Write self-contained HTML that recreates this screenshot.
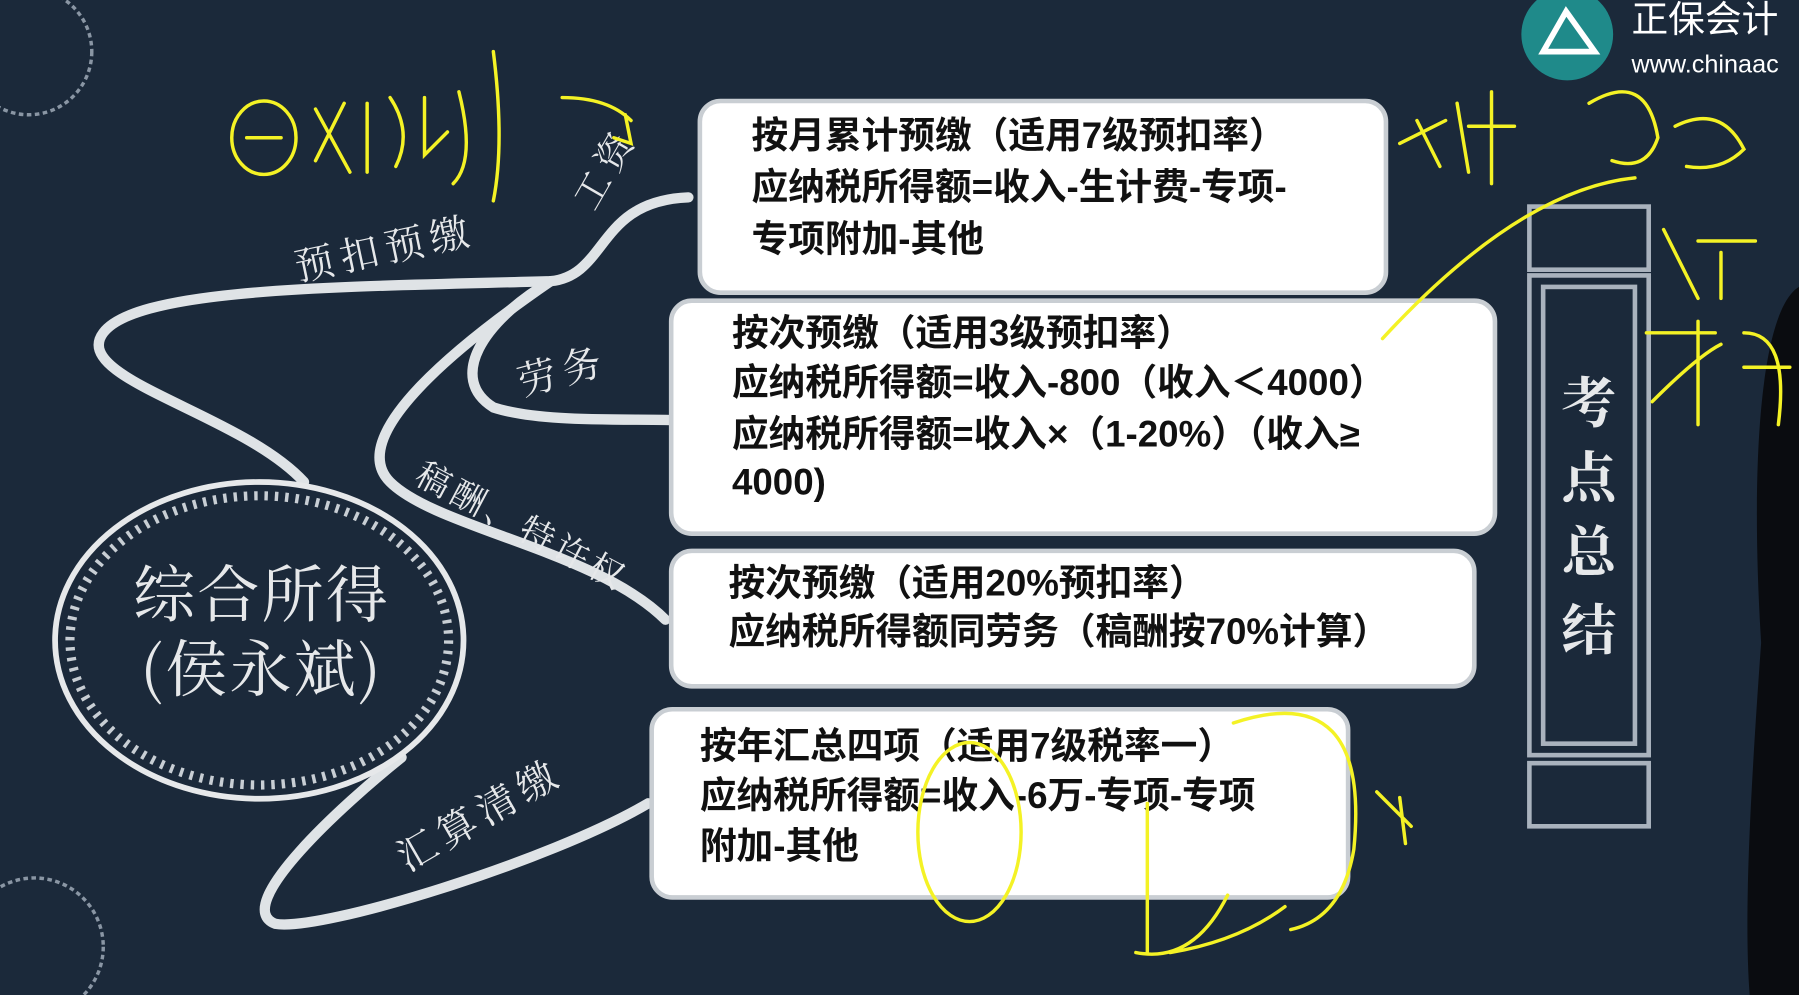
<!DOCTYPE html>
<html><head><meta charset="utf-8"><style>
html,body{margin:0;padding:0;background:#1a2839;overflow:hidden}
svg{display:block}
.b{font-family:"Liberation Sans","Noto Sans CJK SC",sans-serif;font-weight:bold;font-size:32px;fill:#111}
.l{font-family:"Noto Serif CJK SC","Liberation Serif",serif;fill:#e6e8ea}
</style></head><body>
<svg width="1799" height="995" viewBox="0 0 1568 867" preserveAspectRatio="none" xmlns="http://www.w3.org/2000/svg">
<rect width="1568" height="867" fill="#1b293a"/>
<circle cx="25" cy="45" r="55" fill="none" stroke="#8a96a4" stroke-width="3" stroke-dasharray="4 3"/>
<circle cx="30" cy="825" r="60" fill="none" stroke="#8a96a4" stroke-width="3" stroke-dasharray="4 3"/>
<g fill="none" stroke="#dfe3e6" stroke-width="9" stroke-linecap="round">
<path d="M265 420 C210 360 60 330 90 290 C120 250 300 250 480 245 C530 240 520 175 600 172"/>
<path d="M480 245 C420 280 390 330 430 355 C470 368 540 365 585 366"/>
<path d="M480 245 C400 300 300 380 340 420 C380 460 520 480 580 540"/>
<path d="M350 660 C300 700 200 790 240 805 C280 812 480 750 565 700"/>
</g>
<text class="l" style="font-size:32px;letter-spacing:6px" transform="translate(518,185) rotate(-60)">工资</text>
<text class="l" style="font-size:34px;letter-spacing:6px" transform="translate(260,245) rotate(-12)">预扣预缴</text>
<text class="l" style="font-size:34px;letter-spacing:6px" transform="translate(455,345) rotate(-15)">劳务</text>
<text class="l" style="font-size:30px;letter-spacing:4px" transform="translate(360,420) rotate(28)">稿酬、特许权</text>
<text class="l" style="font-size:34px;letter-spacing:6px" transform="translate(355,760) rotate(-30)">汇算清缴</text>
<ellipse cx="226" cy="558" rx="178" ry="138" fill="#1b293a" stroke="#e6e8ea" stroke-width="5"/>
<ellipse cx="226" cy="558" rx="165" ry="126" fill="none" stroke="#c8ced4" stroke-width="8" stroke-dasharray="3 6"/>
<text class="l" x="228" y="537" style="font-size:54px;letter-spacing:2px" text-anchor="middle">综合所得</text>
<text class="l" x="228" y="602" style="font-size:54px;letter-spacing:2px" text-anchor="middle">(侯永斌)</text>
<g fill="#fff" stroke="#c9ced3" stroke-width="4">
<rect x="610" y="88" width="598" height="167" rx="18"/>
<rect x="585" y="262" width="718" height="203" rx="18"/>
<rect x="585" y="480" width="700" height="118" rx="18"/>
<rect x="568" y="618" width="607" height="164" rx="18"/>
</g>
<text class="b" x="655" y="129">按月累计预缴（适用7级预扣率）</text>
<text class="b" x="655" y="174">应纳税所得额=收入-生计费-专项-</text>
<text class="b" x="655" y="219">专项附加-其他</text>
<text class="b" x="638" y="301">按次预缴（适用3级预扣率）</text>
<text class="b" x="638" y="344">应纳税所得额=收入-800（收入＜4000）</text>
<text class="b" x="638" y="389">应纳税所得额=收入×（1-20%）（收入≥</text>
<text class="b" x="638" y="431">4000)</text>
<text class="b" x="635" y="519">按次预缴（适用20%预扣率）</text>
<text class="b" x="635" y="561">应纳税所得额同劳务（稿酬按70%计算）</text>
<text class="b" x="610" y="661">按年汇总四项（适用7级税率一）</text>
<text class="b" x="610" y="704">应纳税所得额=收入-6万-专项-专项</text>
<text class="b" x="610" y="748">附加-其他</text>
<g fill="none" stroke="#a9b2bd" stroke-width="4">
<rect x="1333" y="240" width="104" height="418"/>
<rect x="1345" y="250" width="80" height="398"/>
<rect x="1333" y="180" width="104" height="55"/>
<rect x="1333" y="665" width="104" height="55"/>
</g>
<g class="l" style="font-size:48px;font-weight:bold" fill="#f2f2f2" text-anchor="middle">
<text x="1385" y="368">考</text><text x="1385" y="433">点</text><text x="1385" y="498">总</text><text x="1385" y="566">结</text>
</g>
<circle cx="1366" cy="30" r="40" fill="#1f8a8a"/>
<path d="M1345 45 L1365 10 L1390 45 Z" fill="none" stroke="#fff" stroke-width="5"/>
<text x="1422" y="28" font-family="Liberation Sans,Noto Sans CJK SC,sans-serif" font-size="32" fill="#fff">正保会计</text>
<text x="1422" y="63" font-family="Liberation Sans,sans-serif" font-size="22" fill="#fff">www.chinaac</text>
<path d="M1568 250 C1535 270 1525 400 1535 560 C1525 700 1520 800 1525 867 L1568 867 Z" fill="#0a0c10"/>
<g fill="none" stroke="#f4f225" stroke-width="3" stroke-linecap="round">
<ellipse cx="230" cy="120" rx="28" ry="32"/>
<path d="M215 120 h30 M275 95 l30 55 M300 90 l-25 50 M320 90 v60 M340 85 q20 30 5 60 M370 85 v50 l20 -20 M400 80 q15 60 -5 80 M430 45 q10 80 0 130 M490 85 q40 0 60 20 M545 100 l5 25 l-15 -5"/>
<path d="M1220 125 l40 -20 M1235 105 l20 40 M1270 90 l10 60 M1280 110 h40 M1300 80 v80 M1385 90 q50 -30 60 30 q-10 30 -40 20 M1460 110 q40 -20 60 20 q-20 20 -50 15 M1205 295 q120 -130 220 -140 M1450 200 l30 60 M1480 210 h50 M1500 220 v40 M1435 290 h60 M1440 350 q40 -40 60 -50 M1480 280 v90 M1520 290 q40 0 30 80 M1520 320 h40"/>
<ellipse cx="845" cy="725" rx="45" ry="78"/>
<path d="M1000 700 v130 M1075 630 q120 -40 105 110 q-10 60 -55 70 M1070 780 q-30 60 -80 50 M1020 830 q60 -10 100 -40 M1200 690 l30 30 M1220 695 l5 40"/>
</g>
</svg>
</body></html>
